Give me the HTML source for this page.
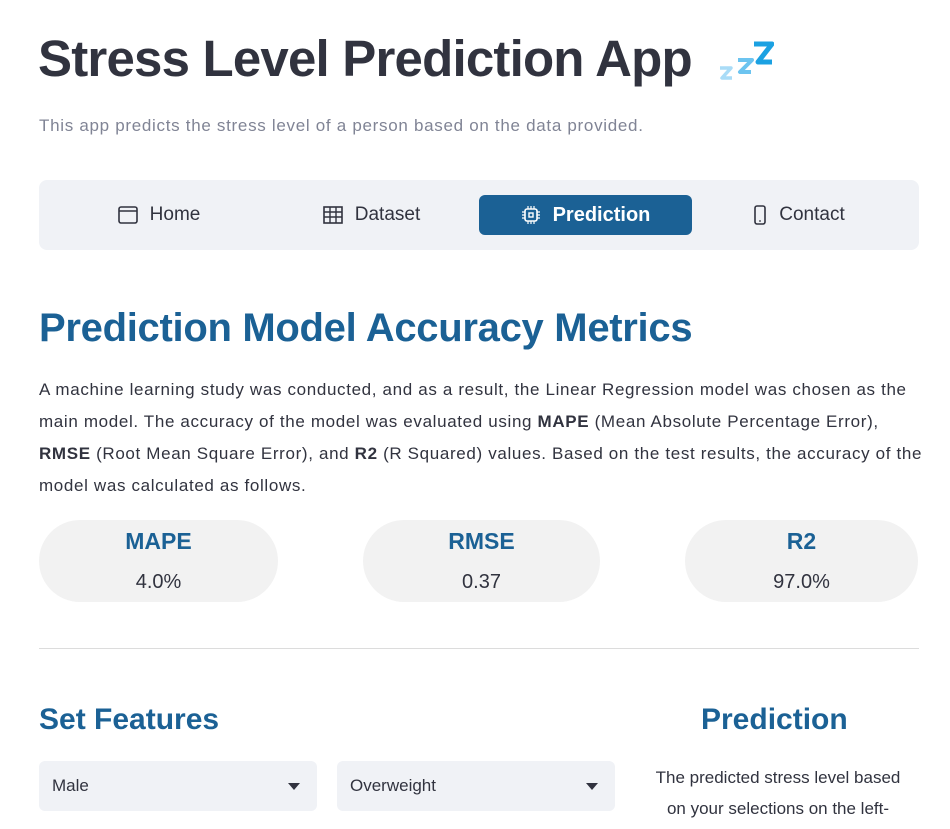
<!DOCTYPE html>
<html><head><meta charset="utf-8"><style>
body{margin:0;background:#fff;font-family:"Liberation Sans",sans-serif;color:#31333f;width:950px;height:829px;overflow:hidden;position:relative}
.a{position:absolute;white-space:nowrap}
h1{position:absolute;left:38px;top:29px;margin:0;font-size:51px;font-weight:bold;letter-spacing:-0.8px;color:#31333f}
.sub{left:39px;top:116px;font-size:17px;color:#808495;letter-spacing:0.7px}
.nav{position:absolute;left:39px;top:180px;width:880px;height:70px;background:#f0f2f6;border-radius:8px}
.tab{position:absolute;top:15px;height:40px;display:flex;align-items:center;justify-content:center;font-size:19px;color:#31333f;gap:12px}
.sel{background:#1b6195;color:#fff;font-weight:bold;border-radius:6px}
h2{position:absolute;left:39px;top:306px;margin:0;font-size:40px;font-weight:bold;color:#1b6195;letter-spacing:-0.3px}
.p{left:39px;font-size:17px;color:#31333f;line-height:32px;letter-spacing:0.65px}
.pill{position:absolute;top:520px;height:82px;background:#f2f2f2;border-radius:41px;text-align:center}
.pill b{display:block;margin-top:8px;font-size:23px;color:#1b6195}
.pill span{display:block;margin-top:16px;font-size:20px;color:#31333f}
.sb{position:absolute;top:761px;height:50px;background:#f0f2f6;border-radius:6px;font-size:17px;line-height:50px;padding-left:13px;box-sizing:border-box}
.sb:after{content:"";position:absolute;right:17px;top:22px;border-left:6px solid transparent;border-right:6px solid transparent;border-top:7px solid #31333f}
</style></head><body>
<h1>Stress Level Prediction App</h1>
<svg class="a" style="left:716px;top:38px" width="58" height="46" viewBox="0 0 58 46">
<path d="M38 6h18L42 24h14" fill="none" stroke="#1ba1e2" stroke-width="5" stroke-linejoin="round"/>
<path d="M22 22h14L24 34h11" fill="none" stroke="#6cc4f0" stroke-width="4" stroke-linejoin="round"/>
<path d="M4 30h11L6 40h10" fill="none" stroke="#a9dcf7" stroke-width="3.5" stroke-linejoin="round"/>
</svg>
<div class="a sub">This app predicts the stress level of a person based on the data provided.</div>
<div class="nav">
 <div class="tab" style="left:40px;width:160px"><svg width="20" height="18" viewBox="0 0 20 18"><rect x="1" y="1" width="18" height="16" rx="2" fill="none" stroke="#31333f" stroke-width="1.6"/><line x1="1" y1="5" x2="19" y2="5" stroke="#31333f" stroke-width="1.6"/></svg>Home</div>
 <div class="tab" style="left:245px;width:175px"><svg width="20" height="18" viewBox="0 0 20 18"><rect x="1" y="1" width="18" height="16" fill="none" stroke="#31333f" stroke-width="1.6"/><path d="M1 6h18M1 11h18M7 1v16M13 1v16" stroke="#31333f" stroke-width="1.4"/></svg>Dataset</div>
 <div class="tab sel" style="left:440px;width:213px;font-size:20px"><svg width="20" height="20" viewBox="0 0 20 20"><rect x="4" y="4" width="12" height="12" rx="2" fill="none" stroke="#fff" stroke-width="1.6"/><rect x="8" y="8" width="4" height="4" fill="none" stroke="#fff" stroke-width="1.4"/><path d="M7 1v3M10 1v3M13 1v3M7 16v3M10 16v3M13 16v3M1 7h3M1 10h3M1 13h3M16 7h3M16 10h3M16 13h3" stroke="#fff" stroke-width="1.2"/></svg>Prediction</div>
 <div class="tab" style="left:690px;width:140px"><svg width="14" height="20" viewBox="0 0 14 20"><rect x="2" y="1" width="10" height="18" rx="2" fill="none" stroke="#31333f" stroke-width="1.6"/><circle cx="7" cy="16" r="0.9" fill="#31333f"/></svg>Contact</div>
</div>
<h2>Prediction Model Accuracy Metrics</h2>
<div class="a p" style="top:374px">A machine learning study was conducted, and as a result, the Linear Regression model was chosen as the</div>
<div class="a p" style="top:406px">main model. The accuracy of the model was evaluated using <b>MAPE</b> (Mean Absolute Percentage Error),</div>
<div class="a p" style="top:438px"><b>RMSE</b> (Root Mean Square Error), and <b>R2</b> (R Squared) values. Based on the test results, the accuracy of the</div>
<div class="a p" style="top:470px">model was calculated as follows.</div>
<div class="pill" style="left:39px;width:239px"><b>MAPE</b><span>4.0%</span></div>
<div class="pill" style="left:363px;width:237px"><b>RMSE</b><span>0.37</span></div>
<div class="pill" style="left:685px;width:233px"><b>R2</b><span>97.0%</span></div>
<div class="a" style="left:39px;top:648px;width:880px;height:1px;background:#dcdcdc"></div>
<div class="a" style="left:39px;top:703px;font-size:30px;font-weight:bold;color:#1b6195">Set Features</div>
<div class="a" style="left:701px;top:703px;font-size:30px;font-weight:bold;color:#1b6195">Prediction</div>
<div class="sb" style="left:39px;width:278px">Male</div>
<div class="sb" style="left:337px;width:278px">Overweight</div>
<div class="a" style="left:633px;top:762px;width:290px;text-align:center;font-size:17px;line-height:31px;white-space:normal">The predicted stress level based<br>on your selections on the left-</div>
</body></html>
